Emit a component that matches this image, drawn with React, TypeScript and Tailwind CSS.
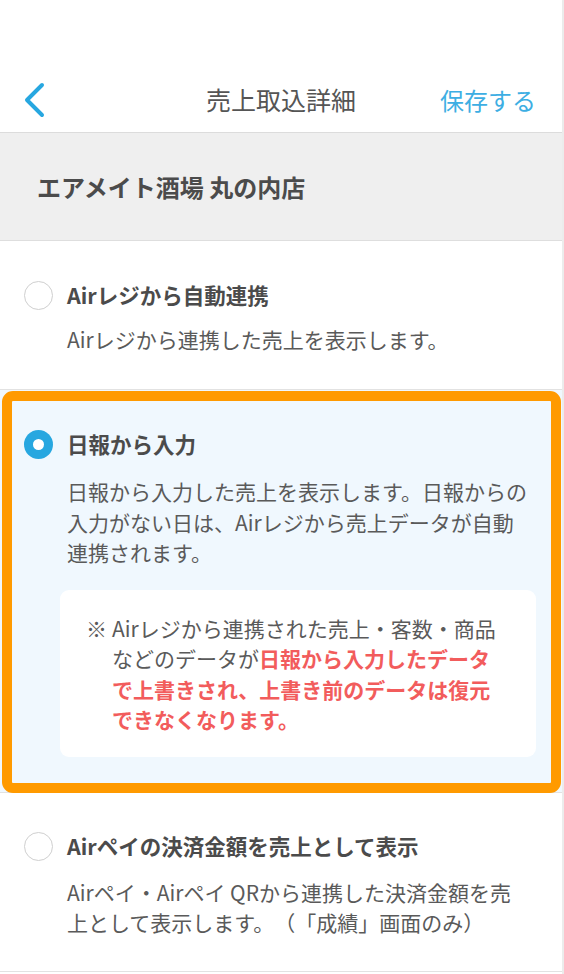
import { ReactNode } from "react";

const font = {
  fontFamily: '"Noto Sans CJK JP", "Noto Sans", sans-serif',
};

function Radio({ checked }: { checked?: boolean }) {
  if (checked) {
    return (
      <span className="flex h-[29px] w-[29px] shrink-0 items-center justify-center rounded-full bg-[#27a7e0]">
        <span className="h-[11px] w-[11px] rounded-full bg-white" />
      </span>
    );
  }
  return (
    <span className="h-[29px] w-[29px] shrink-0 rounded-full border-[1.5px] border-[#cfcfcf] bg-white" />
  );
}

function Option({
  title,
  checked,
  children,
}: {
  title: string;
  checked?: boolean;
  children: ReactNode;
}) {
  return (
    <div className="pl-[24px] pr-[20px] pt-[39px]">
      <div className="flex h-[30px] items-center gap-[14px]">
        <Radio checked={checked} />
        <span className="text-[21.5px] font-bold text-[#4b4b4b]">{title}</span>
      </div>
      {children}
    </div>
  );
}

export default function App() {
  return (
    <div
      className="min-h-screen w-full border-r-2 border-[#ececec] bg-white text-[#555] [text-spacing-trim:space-all]"
      style={font}
    >
      {/* nav bar */}
      <header className="flex h-[133px] items-end border-b border-[#dcdcdc] shadow-[0_1px_1px_rgba(0,0,0,0.04)]">
        <div className="relative flex h-[64px] w-full items-center justify-between pl-[22px] pr-[26px]">
          <svg width="26" height="36" viewBox="0 0 26 36" fill="none">
            <path
              d="M20 3 L5 18 L20 33"
              stroke="#27a7e0"
              strokeWidth="4"
              strokeLinecap="round"
              strokeLinejoin="round"
            />
          </svg>
          <h1 className="absolute left-1/2 -translate-x-1/2 text-[25px] font-normal text-[#555]">
            売上取込詳細
          </h1>
          <button className="text-[24px] text-[#3daee3]">保存する</button>
        </div>
      </header>

      {/* store name */}
      <div className="flex h-[108px] items-center border-b border-[#dedede] bg-[#efefef] pl-[37px]">
        <span className="text-[24px] font-bold text-[#4b4b4b]">
          エアメイト酒場 丸の内店
        </span>
      </div>

      {/* auto sync */}
      <div className="border-b border-[#e2e2e2] pb-[35px]">
        <Option title="Airレジから自動連携">
          <p className="ml-[43px] mt-[14px] text-[21px] leading-[30px] text-[#5a5a5a]">
            Airレジから連携した売上を表示します。
          </p>
        </Option>
      </div>

      {/* daily report input (selected) */}
      <div className="relative border-b border-[#e2e2e2] bg-[#f0f8fe] pb-[35px]">
        <Option title="日報から入力" checked>
          <p className="ml-[43px] mt-[17px] text-[21px] leading-[30.5px] text-[#5a5a5a]">
            日報から入力した売上を表示します。日報からの
            <br />
            入力がない日は、Airレジから売上データが自動
            <br />
            連携されます。
          </p>
          <div className="ml-[36px] mr-[6px] mt-[22px] rounded-[9px] bg-white pb-[22px] pl-[26px] pr-[10px] pt-[23px]">
            <div className="flex text-[21px] leading-[30.5px] text-[#5a5a5a]">
              <span className="w-[26px] shrink-0">※</span>
              <p>
                Airレジから連携された売上・客数・商品
                <br />
                などのデータが
                <span className="font-bold text-[#f25c5c]">
                  日報から入力したデータ
                  <br />
                  で上書きされ、上書き前のデータは復元
                  <br />
                  できなくなります。
                </span>
              </p>
            </div>
          </div>
        </Option>
        <div className="pointer-events-none absolute -bottom-[1px] left-[2px] right-[1px] top-[1px] rounded-[11px] border-[10px] border-[#ff9a00]" />
      </div>

      {/* AirPAY amount */}
      <div className="border-b border-[#e2e2e2] pb-[33px]">
        <Option title="Airペイの決済金額を売上として表示">
          <p className="ml-[43px] mt-[15px] text-[21px] leading-[30.5px] text-[#5a5a5a]">
            Airペイ・Airペイ QRから連携した決済金額を売
            <br />
            上として表示します。（「成績」画面のみ）
          </p>
        </Option>
      </div>
    </div>
  );
}
